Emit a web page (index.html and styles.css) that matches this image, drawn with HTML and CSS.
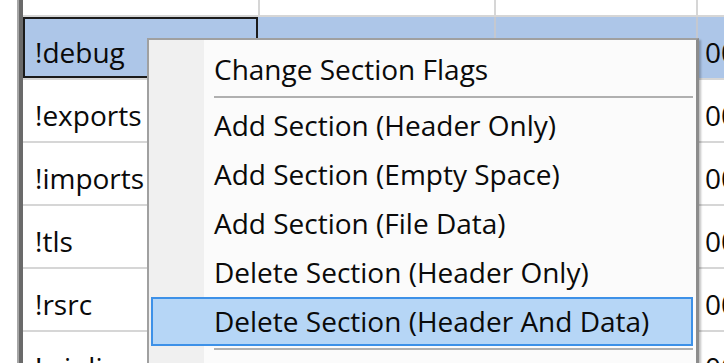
FILE: index.html
```html
<!DOCTYPE html>
<html>
<head>
<meta charset="utf-8">
<link rel="stylesheet" href="styles.css">
</head>
<body>
<div class="table">
  <div class="rows">
    <div class="row">
      <div class="cell c1">!reloc</div><div class="cell c2">00001000</div><div class="cell c3">00012000</div><div class="cell c4">00000000</div>
    </div>
    <div class="row selected">
      <div class="cell c1 focus">!debug</div><div class="cell c2"></div><div class="cell c3"></div><div class="cell c4">00000000</div>
    </div>
    <div class="row">
      <div class="cell c1">!exports</div><div class="cell c2"></div><div class="cell c3"></div><div class="cell c4">00000000</div>
    </div>
    <div class="row">
      <div class="cell c1">!imports</div><div class="cell c2"></div><div class="cell c3"></div><div class="cell c4">00000000</div>
    </div>
    <div class="row">
      <div class="cell c1">!tls</div><div class="cell c2"></div><div class="cell c3"></div><div class="cell c4">00000000</div>
    </div>
    <div class="row">
      <div class="cell c1">!rsrc</div><div class="cell c2"></div><div class="cell c3"></div><div class="cell c4">00000000</div>
    </div>
    <div class="row">
      <div class="cell c1">!winlic</div><div class="cell c2"></div><div class="cell c3"></div><div class="cell c4">00000000</div>
    </div>
  </div>
</div>

<div class="menu">
  <div class="item">Change Section Flags</div>
  <div class="sep"></div>
  <div class="item">Add Section (Header Only)</div>
  <div class="item">Add Section (Empty Space)</div>
  <div class="item">Add Section (File Data)</div>
  <div class="item">Delete Section (Header Only)</div>
  <div class="item active">Delete Section (Header And Data)</div>
  <div class="sep"></div>
</div>
</body>
</html>
```
FILE: styles.css
```css
html, body {
  margin: 0;
  padding: 0;
}
body {
  width: 724px;
  height: 363px;
  overflow: hidden;
  background: #ffffff;
  position: relative;
  font-family: "Open Sans", "Noto Sans", sans-serif;
  font-size: 28px;
  color: #0a0a0a;
}
.table {
  margin-left: 17px;
  margin-top: -46px;
  border-left: 2px solid #a6a6a6;
}
.rows {
  border-left: 4px solid #6a6a6a;
}
.row {
  display: grid;
  grid-template-columns: 237px 236px 202px 1fr;
  height: 63px;
  box-sizing: border-box;
  border-bottom: 2px solid #d6d6d6;
}
.cell {
  box-sizing: border-box;
  border-right: 2px solid #d6d6d6;
  height: 61px;
  padding-top: 9px;
  line-height: 52px;
  white-space: nowrap;
  overflow: hidden;
}
.c1 { padding-left: 12px; }
.c2 { padding-left: 10px; }
.c3 { padding-left: 9px; }
.c4 { padding-left: 7px; border-right: none; }
.selected {
  background: #adc6e8;
}
.selected .c1 {
  border-right-color: #adc6e8;
}
.selected .c2,
.selected .c3 {
  border-right-color: #c4c8d0;
}
.focus {
  box-shadow: inset 0 0 0 2px #1b1b1b;
}

.menu {
  position: absolute;
  left: 147px;
  top: 38px;
  width: 552px;
  height: 380px;
  box-sizing: border-box;
  border: 2px solid #a0a0a0;
  border-right: 3px solid #8c8c8c;
  background: linear-gradient(to right, #f0f0f0 0, #f0f0f0 55px, #fbfbfb 55px);
  padding-top: 5px;
  box-shadow: 2px 2px 2px rgba(0, 0, 0, 0.25);
}
.item {
  height: 49px;
  line-height: 49px;
  margin: 0 3px 0 2px;
  padding-left: 63px;
  box-sizing: border-box;
  white-space: nowrap;
  color: #0a0a0a;
}
.item.active {
  background: #b6d6f6;
  border: 2px solid #3d91e8;
  padding-left: 61px;
  line-height: 45px;
}
.sep {
  height: 2px;
  background: #b0b0b0;
  margin: 2px 3px 3px 65px;
}
```
